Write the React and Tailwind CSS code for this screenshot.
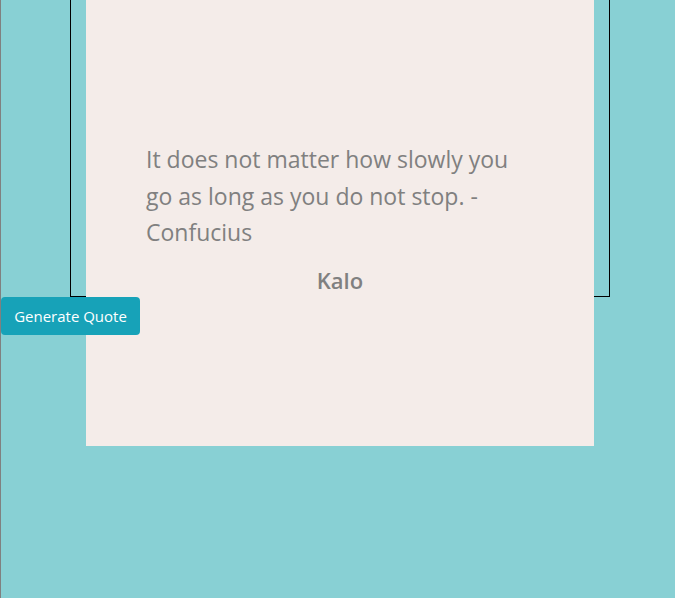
export default function App() {
  return (
    <div className="h-[598px] w-[675px] overflow-hidden bg-[#88d0d4] border-l border-[#808080] font-['Open_Sans',sans-serif]">
      <div className="ml-[69px] w-[540px] h-[297px] border-x border-b border-black">
        <div className="mx-auto w-[508px] h-[446px] bg-[#f4ece9] flex flex-col justify-center pl-[60px] pr-[80px] pb-[8px]">
          <p className="text-[23px] leading-[36.5px] text-[#808080]">
            It does not matter how slowly you go as long as you do not stop. - Confucius
          </p>
          <p className="mt-[13px] -mr-[20px] text-center text-[22px] font-semibold text-[#808080]">Kalo</p>
        </div>
      </div>
      <button className="h-[38px] w-[139px] rounded-[4px] bg-[#17a2b8] text-[15px] text-white">
        Generate Quote
      </button>
    </div>
  )
}
